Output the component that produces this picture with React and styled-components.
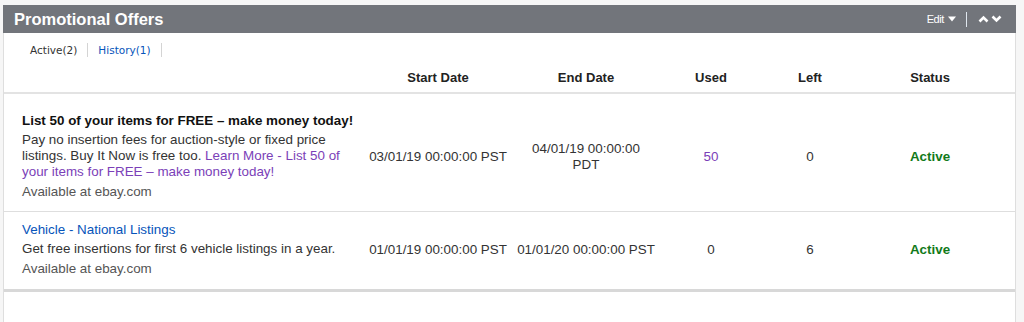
import styled, { createGlobalStyle } from "styled-components";

const GlobalStyle = createGlobalStyle`
  body {
    margin: 0;
    background: #f6f6f6;
    font-family: "Liberation Sans", Arial, sans-serif;
    color: #333;
  }
`;

const Page = styled.div`
  padding: 5px 8px 0 3px;
  height: 322px;
  box-sizing: border-box;
  overflow: hidden;
`;

const Panel = styled.section`
  display: flex;
  flex-direction: column;
  height: 100%;
`;

const Header = styled.div`
  display: flex;
  align-items: center;
  justify-content: space-between;
  height: 28px;
  padding: 0 14px 0 11px;
  background: #72757b;
  color: #fff;
`;

const Title = styled.h2`
  margin: 0;
  font-size: 16.5px;
  font-weight: bold;
`;

const Tools = styled.div`
  display: flex;
  align-items: center;
`;

const EditButton = styled.span`
  display: flex;
  align-items: center;
  gap: 4px;
  font-size: 11px;
  letter-spacing: -0.4px;
`;

const Divider = styled.span`
  width: 1px;
  height: 15px;
  margin: 0 9px 0 10px;
  background: #dfe6ee;
`;

const Body = styled.div`
  flex: 1;
  background: #fff;
  border-left: 1px solid #dedede;
  border-right: 1px solid #dedede;
`;

const Tabs = styled.div`
  display: flex;
  align-items: center;
  padding: 10px 0 0 26px;
  height: 14px;
  font-family: "DejaVu Sans", Verdana, sans-serif;
  font-size: 10.5px;
`;

const Tab = styled.span`
  color: ${(p) => (p.$active ? "#333" : "#0654ba")};
  padding-right: 10px;
  margin-right: 10px;
  border-right: 1px solid #d4d4d4;
  line-height: 14px;
`;

const Grid = styled.div`
  display: grid;
  grid-template-columns: 358px 152px 144px 106px 92px 148px;
  align-items: center;
`;

const HeadRow = styled(Grid)`
  padding: 13px 0 6px;
  line-height: 16px;
  border-bottom: 2px solid #e3e3e3;
`;

const HeadCell = styled.div`
  font-size: 13px;
  font-weight: bold;
  color: #222;
  text-align: center;
`;

const Row = styled(Grid)`
  padding: ${(p) => (p.$tall ? "19px 0 11px" : "10px 0 12px")};
  border-bottom: ${(p) => (p.$last ? "3px solid #d8d8d8" : "1px solid #dedede")};
`;

const Info = styled.div`
  padding-left: 18px;
  font-size: 13.4px;
`;

const OfferName = styled.div`
  font-weight: ${(p) => (p.$link ? "normal" : "bold")};
  color: ${(p) => (p.$link ? "#0654ba" : "#111")};
  line-height: 16px;
  margin-bottom: 3px;
`;

const Desc = styled.div`
  line-height: 16px;
  color: #333;
  padding-right: 12px;
`;

const Visited = styled.span`
  color: #7b3fb8;
`;

const Where = styled.div`
  margin-top: 4px;
  line-height: 16px;
  color: #555;
`;

const Cell = styled.div`
  font-size: 13.4px;
  line-height: 16px;
  text-align: center;
  padding: 0 2.9px;
  color: ${(p) => p.$color || "#333"};
  font-weight: ${(p) => (p.$bold ? "bold" : "normal")};
`;

const Caret = () => (
  <svg width="8" height="6" viewBox="0 0 8 6">
    <path d="M0 0.5h8L4 5.5z" fill="#fff" />
  </svg>
);

const Chevron = ({ up }) => (
  <svg width="11" height="8" viewBox="0 0 11 8" style={{ marginLeft: 2 }}>
    <polyline
      points={up ? "1.5,6.5 5.5,2.5 9.5,6.5" : "1.5,1.5 5.5,5.5 9.5,1.5"}
      fill="none"
      stroke="#fff"
      strokeWidth="2.6"
      strokeLinejoin="miter"
    />
  </svg>
);

const offers = [
  {
    name: "List 50 of your items for FREE – make money today!",
    desc: "Pay no insertion fees for auction-style or fixed price listings. Buy It Now is free too. ",
    more: "Learn More - List 50 of your items for FREE – make money today!",
    start: "03/01/19 00:00:00 PST",
    end: "04/01/19 00:00:00 PDT",
    used: "50",
    usedVisited: true,
    left: "0",
  },
  {
    name: "Vehicle - National Listings",
    link: true,
    desc: "Get free insertions for first 6 vehicle listings in a year.",
    start: "01/01/19 00:00:00 PST",
    end: "01/01/20 00:00:00 PST",
    used: "0",
    left: "6",
  },
];

export default function App() {
  return (
    <Page>
      <GlobalStyle />
      <Panel>
        <Header>
          <Title>Promotional Offers</Title>
          <Tools>
            <EditButton>
              Edit <Caret />
            </EditButton>
            <Divider />
            <Chevron up />
            <Chevron />
          </Tools>
        </Header>
        <Body>
          <Tabs>
            <Tab $active>Active(2)</Tab>
            <Tab>History(1)</Tab>
          </Tabs>
          <HeadRow>
            <div />
            <HeadCell>Start Date</HeadCell>
            <HeadCell>End Date</HeadCell>
            <HeadCell>Used</HeadCell>
            <HeadCell>Left</HeadCell>
            <HeadCell>Status</HeadCell>
          </HeadRow>
          {offers.map((o, i) => (
            <Row key={o.name} $tall={i === 0} $last={i === offers.length - 1}>
              <Info>
                <OfferName $link={o.link}>{o.name}</OfferName>
                <Desc>
                  {o.desc}
                  {o.more && <Visited>{o.more}</Visited>}
                </Desc>
                <Where>Available at ebay.com</Where>
              </Info>
              <Cell>{o.start}</Cell>
              <Cell>{o.end}</Cell>
              <Cell $color={o.usedVisited ? "#7b3fb8" : undefined}>{o.used}</Cell>
              <Cell>{o.left}</Cell>
              <Cell $bold $color="#127a1a">
                Active
              </Cell>
            </Row>
          ))}
        </Body>
      </Panel>
    </Page>
  );
}
